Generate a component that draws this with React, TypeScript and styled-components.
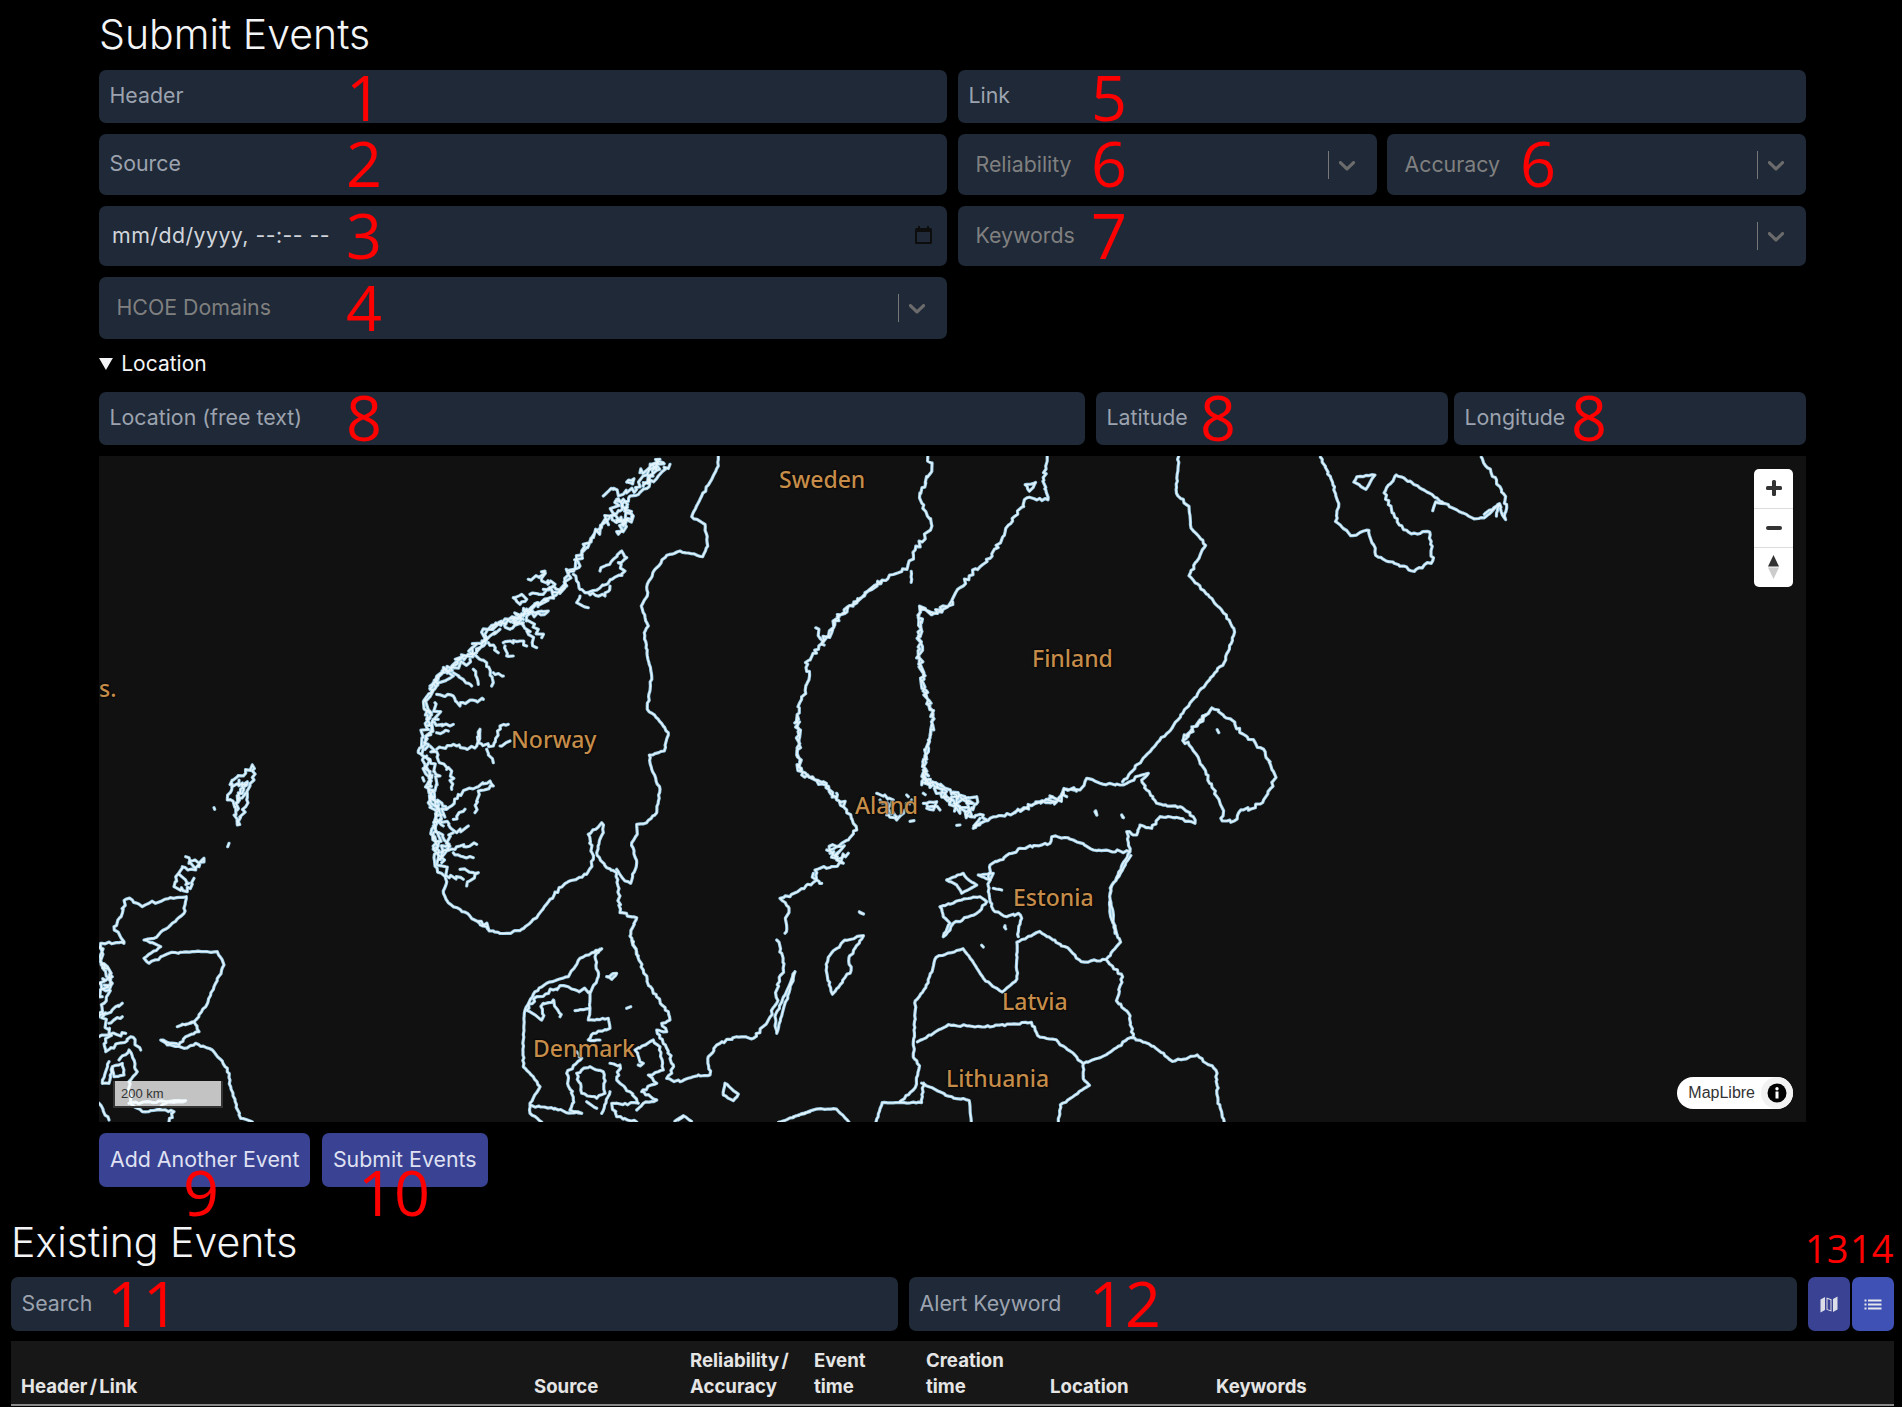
import React from "react";
import styled, { createGlobalStyle } from "styled-components";

const GlobalStyle = createGlobalStyle`
  html, body {
    margin: 0;
    background: #000;
  }
  body {
    font-family: Inter, "Liberation Sans", sans-serif;
    color: #e5e7eb;
  }
`;

const Page = styled.div`
  padding: 10px 8px 0 11px;
  box-sizing: border-box;
  width: 1902px;
  height: 1407px;
  overflow: hidden;
`;

const FormSection = styled.section`
  width: 1707px;
  margin: 0 auto;
`;

const Title = styled.h1`
  margin: 0;
  height: 48px;
  font-size: 41px;
  line-height: 48px;
  font-weight: 300;
  color: #f3f4f6;
`;

const FormGrid = styled.div`
  margin-top: 12px;
  display: grid;
  grid-template-columns: 848px 848px;
  grid-template-rows: 53px 61px 60px 62px;
  column-gap: 11px;
  row-gap: 11px;
`;

const Pair = styled.div`
  display: grid;
  grid-template-columns: 1fr 1fr;
  gap: 10px;
`;

const Field = styled.div`
  position: relative;
  display: flex;
  align-items: center;
  box-sizing: border-box;
  padding: 0 11px 3px 10.5px;
  border-radius: 7px;
  background: #1f2937;
  color: #9ca3af;
  font-size: 21.33px;
`;

const DateField = styled(Field)`
  padding: 0 15px 2px 13px;
  justify-content: space-between;
  color: #d1d5db;
  letter-spacing: 0.45px;
`;

const SelectField = styled(Field)`
  padding: 0 16px 2px 17.5px;
  justify-content: space-between;
  color: #808080;
`;

const Indicators = styled.span`
  display: flex;
  align-items: center;
  margin-bottom: -2px;
`;

const Separator = styled.span`
  width: 1px;
  height: 28px;
  margin-right: 4px;
  background: #777;
`;

const Mark = styled.span<{ $x: number; $dy?: number; $small?: boolean }>`
  position: absolute;
  left: ${(p) => p.$x}px;
  top: 50%;
  transform: translateY(calc(-50% - 2px + ${(p) => p.$dy ?? 0}px));
  z-index: 2;
  color: #ff0000;
  font-family: "Open Sans", "Noto Sans", sans-serif;
  font-size: ${(p) => (p.$small ? 38 : 63)}px;
  font-weight: 400;
  letter-spacing: 0;
  line-height: 1;
  pointer-events: none;
`;

const LocationDetails = styled.details`
  margin-top: 10px;
`;

const LocationSummary = styled.summary`
  height: 30px;
  line-height: 30px;
  font-size: 21px;
  color: #f3f4f6;
`;

const LocationRow = styled.div`
  display: flex;
  height: 53px;
  margin-top: 13px;
`;

const LocationField = styled(Field)`
  flex: 0 0 986px;
`;

const LatField = styled(Field)`
  flex: 0 0 352px;
  margin-left: 11px;
`;

const LongField = styled(Field)`
  flex: 0 0 352px;
  margin-left: 6px;
`;

const MapBox = styled.div`
  position: relative;
  height: 666px;
  margin-top: 11px;
  overflow: hidden;
  background: #111;
`;

const MapSvg = styled.svg`
  display: block;
  width: 100%;
  height: 100%;
`;

const Place = styled.span<{ $x: number; $y: number }>`
  position: absolute;
  left: ${(p) => p.$x}px;
  top: ${(p) => p.$y}px;
  color: #c68d4a;
  font-family: "Noto Sans", "Open Sans", sans-serif;
  font-size: 23px;
  font-weight: 500;
  line-height: 30px;
  text-shadow: 0 0 2px #000, 0 0 2px #000;
`;

const ZoomControl = styled.div`
  position: absolute;
  top: 13px;
  right: 13px;
  width: 39px;
  border-radius: 5px;
  background: #fff;
  overflow: hidden;
`;

const ZoomCell = styled.div`
  display: flex;
  align-items: center;
  justify-content: center;
  height: 38.5px;
  & + & {
    border-top: 1px solid #ddd;
  }
`;

const Attribution = styled.div`
  position: absolute;
  right: 13px;
  bottom: 13px;
  display: flex;
  align-items: center;
  height: 32px;
  padding-left: 11px;
  border-radius: 16px;
  background: #fff;
  color: #333;
  font-family: "Liberation Sans", Arial, sans-serif;
  font-size: 16px;
`;

const InfoDisc = styled.span`
  display: flex;
  align-items: center;
  justify-content: center;
  width: 32px;
  height: 32px;
  margin-left: 6px;
  border-radius: 50%;
  background: #f2f2f2;
`;

const ScaleBar = styled.div`
  position: absolute;
  left: 14px;
  bottom: 14px;
  box-sizing: border-box;
  width: 110px;
  height: 27px;
  padding-left: 6px;
  border: 2px solid #333;
  border-top: none;
  background: rgba(255, 255, 255, 0.75);
  color: #333;
  font-family: "Liberation Sans", Arial, sans-serif;
  font-size: 13px;
  line-height: 25px;
`;

const ButtonRow = styled.div`
  display: flex;
  gap: 11.5px;
  margin-top: 11px;
`;

const Button = styled.button`
  position: relative;
  height: 54px;
  padding: 0 11px 3px;
  border: none;
  border-radius: 7px;
  background: #3a4294;
  color: #dfe1f2;
  font-family: inherit;
  font-size: 21.33px;
`;

const ExistingTitle = styled(Title)`
  margin-top: 31px;
`;

const FilterRow = styled.div`
  display: flex;
  height: 54px;
  margin-top: 11px;
`;

const SearchField = styled(Field)`
  flex: 0 0 887px;
`;

const AlertField = styled(Field)`
  flex: 0 0 888px;
  margin-left: 11px;
`;

const ViewButton = styled.button<{ $active?: boolean; $first?: boolean }>`
  position: relative;
  flex: 0 0 42px;
  display: flex;
  align-items: center;
  justify-content: center;
  padding: 0;
  border: none;
  border-radius: 7px;
  background: ${(p) => (p.$active ? "#3f51b5" : "#3a4294")};
  color: #e5e7eb;
  margin-left: ${(p) => (p.$first ? 11 : 2)}px;
`;

const TableHead = styled.table`
  width: 1883px;
  margin-top: 10px;
  border-collapse: collapse;
  table-layout: fixed;
  background: #171717;
`;

const HeadCell = styled.th<{ $w: number }>`
  width: ${(p) => p.$w}px;
  box-sizing: border-box;
  padding: 5.5px 10px 5.5px;
  border-bottom: 2px solid #8a8a8a;
  color: #e5e5e5;
  font-size: 18.6px;
  font-weight: 700;
  line-height: 26px;
  word-spacing: -2px;
  text-align: left;
  vertical-align: bottom;
`;

// map tracing: coordinates are written in the space of a crop, then moved to map space
type Trace = [number, string];
type TraceGroup = { sx: number; sy: number; dx: number; dy: number; traces: Trace[] };

const traceGroups: TraceGroup[] = [
  {
    // Norway and western Sweden
    sx: 3,
    sy: 3,
    dx: 311,
    dy: 0,
    traces: [
      [0.5, "925,0 925,30 905,70 875,120 845,182 885,205 893,270 878,302 810,285 770,298 740,335 712,385 712,420 694,450 715,510 703,530 712,600 725,660 712,760 745,790 775,830 763,885 718,897 725,940 750,1000 740,1070 710,1100 680,1105 682,1135 665,1160 680,1220 662,1282 645,1275 620,1240"],
      [0.9, "100,1305 115,1340 150,1360 200,1395 240,1425 290,1432 335,1420 380,1385 420,1330 470,1280 530,1255 550,1210 535,1135 575,1100 580,1130 560,1190 590,1235 620,1250 630,1370 680,1385 660,1440 685,1500"],
      [1.6, "780,25 745,60 700,100 660,120 630,165 600,180 575,210 545,245 515,285 500,310 510,330 475,355 465,395 420,425 370,450 335,480 290,490 235,520 215,570 170,600 110,640 70,680 45,735 50,790 65,820 40,870 25,890 45,925 60,970 55,1040 80,1080 65,1120 80,1190 75,1230 105,1260 100,1305"],
      [3, "640,130 600,180 545,245 500,310 475,355 420,425 335,480 235,520 170,600 70,680 50,790 40,870 60,970 80,1080 80,1190 105,1260"],
      [2.2, "580,120 610,100 640,115 680,100 700,60 750,10 720,40 760,20 700,80"],
      [2.2, "620,130 670,180 625,235 650,190 605,180 640,210 665,180"],
      [1, "650,78 672,68 668,84 650,78"],
      [1.1, "570,345 610,310 635,285 650,305 625,320 645,345 590,385 525,410 510,400 490,355"],
      [1, "525,410 585,420 600,390"],
      [1, "510,420 500,440 535,455"],
      [2, "355,370 405,345 395,375 435,385 400,415 360,415"],
      [0.6, "310,425 335,415 350,430 330,445 310,425"],
      [2.2, "340,465 415,465 350,480 385,520 395,545"],
      [1.8, "340,500 380,575"],
      [1.8, "275,500 300,520 340,490"],
      [1.1, "280,560 330,555 350,570"],
      [1.1, "285,570 290,600 310,600"],
      [1.2, "235,560 265,590"],
      [1.1, "180,590 230,620 250,680 245,690"],
      [1, "250,650 280,660"],
      [1.3, "130,650 185,690"],
      [1, "190,640 205,685"],
      [1.2, "100,640 130,660 80,690 60,700"],
      [1.2, "80,715 130,720 150,750 160,740 220,730"],
      [1.2, "65,800 120,810 130,805"],
      [1, "80,830 115,825"],
      [1.1, "80,880 130,865 170,880 200,870 210,820 205,860 250,870 270,810 295,805"],
      [1, "270,870 300,855"],
      [1, "230,880 250,920"],
      [2, "60,870 110,940 125,945 125,1000"],
      [2.4, "50,900 90,960 60,1020 110,1060 80,1100"],
      [1.2, "110,1060 170,1000 240,975 250,990 205,1005 195,1070"],
      [1.2, "130,1090 165,1060"],
      [1.8, "90,1090 140,1130 175,1110"],
      [2.2, "70,1110 120,1170 85,1210 130,1130"],
      [1.4, "80,1190 150,1170 200,1165"],
      [1.2, "130,1190 190,1205"],
      [1.2, "150,1240 205,1250 170,1290"],
      [1.2, "110,1260 160,1270"],
      [0.3, "38,965 42,975"],
      [0.6, "545,1490 575,1478"],
      [2.6, "60,690 100,650 150,625 180,610"],
      [2.6, "45,880 60,830 85,790 75,740"],
      [2.8, "50,930 60,1000 80,1060 100,1110"],
      [2.8, "70,1130 85,1170 95,1220"],
      [2.6, "290,490 340,510 310,500 360,470"],
      [2.6, "640,130 660,170 620,200"],
      [2.8, "690,50 740,30 700,90"],
      [2.4, "400,400 470,390"],
      [2.2, "200,590 240,540 270,520"],
      [2.2, "200,1395 245,1425"],
    ],
  },
  {
    // Denmark and southern Sweden
    sx: 3,
    sy: 3,
    dx: 411,
    dy: 484,
    traces: [
      [0.9, "365,0 380,40 400,90 430,160 475,215 480,240 455,250 470,275 440,270 470,325 490,375 485,400 470,415 510,425 550,410 600,405 595,350 620,315 680,290 730,295 770,250 800,190 800,150 820,90 815,40 800,0"],
      [0.5, "855,95 800,280 795,230 855,95"],
      [0.4, "270,28 210,55 175,110 110,130 75,155 45,210 40,300 40,380 70,410 90,440 60,490 60,520 95,546"],
      [0.5, "270,28 255,50 265,110 240,160 240,205 235,240 295,235 300,265 250,280 235,300 270,300"],
      [1.6, "240,155 175,140 130,150 80,170 50,210 95,240 100,190 130,180 150,230"],
      [0.4, "195,212 240,205"],
      [0.5, "290,110 320,100 305,118 290,110"],
      [0.2, "350,205 362,200"],
      [1, "170,400 215,355 200,335"],
      [0.8, "200,400 240,380 280,395 285,460 260,475 215,460 200,400"],
      [1, "170,400 190,480 180,510 215,520 145,510 60,495"],
      [1, "300,370 330,375 320,420 360,455 385,490 345,490 305,490 320,530 380,546"],
      [0.6, "440,480 400,490 380,510"],
      [0.9, "375,330 430,300 450,320 460,390 415,405 440,430 395,455 440,480"],
      [1.2, "375,330 400,370 385,375"],
      [0.4, "645,430 685,462 670,482 640,465 645,430"],
      [0.4, "300,455 275,520"],
      [0.4, "230,485 260,505"],
      [0.4, "505,540 520,530"],
      [0.3, "850,530 900,515"],
    ],
  },
  {
    // Scotland, Orkney, Shetland
    sx: 3,
    sy: 3,
    dx: 0,
    dy: 294,
    traces: [
      [1.6, "460,45 440,70 400,90 385,150 410,170 415,225 440,170 445,130 465,90 460,45"],
      [1.8, "400,110 445,95 410,160 440,130"],
      [2.6, "420,90 430,130 415,180"],
      [0.2, "345,173 347,178"],
      [0.2, "390,280 386,290"],
      [1.5, "260,320 300,340 315,325 290,360 250,350 230,380 225,410 265,425 285,385"],
      [2.4, "240,370 270,400"],
      [2.4, "270,340 300,350"],
      [1.1, "262,440 225,445 150,460 130,470 100,450 80,448 70,490 45,530 75,580 5,580 10,650 40,700 15,760 0,800"],
      [0.6, "262,440 255,490 215,525 165,565 135,570 185,590 135,625 150,640 210,610 280,605 355,605 375,645 345,710 320,770 285,815 235,830 285,815 300,845 260,860 240,885 185,870 205,885 255,895 290,880 340,900 385,955 395,1010 425,1105 460,1116"],
      [1.2, "0,800 70,760"],
      [1.2, "30,820 70,800"],
      [1.4, "0,860 80,850"],
      [1.2, "20,905 95,860 125,900"],
      [0.8, "60,930 90,900 115,965 90,995 95,1060 130,1085 190,1080 225,1085 210,1116"],
      [0.5, "30,935 10,1000 30,1000 40,950 70,940 75,975 45,980 40,950"],
      [0.6, "90,1060 260,1052 200,1060 170,1080"],
      [0.6, "0,1060 30,1110"],
      [2, "10,640 40,680 0,700 30,720"],
      [2.6, "5,590 30,680 10,740"],
      [2.2, "10,780 30,850 20,900"],
    ],
  },
  {
    // Aland, Gulf of Finland, Estonia
    sx: 3,
    sy: 3,
    dx: 681,
    dy: 304,
    traces: [
      [0.9, "1050,275 940,270 880,240 815,230 810,250 720,265 660,300 630,315 625,395 640,450 680,470 715,460 725,475 715,530"],
      [0.6, "480,440 545,420 600,410 620,425 590,460 520,490 510,510 490,530 510,490 490,470 480,440"],
      [0.5, "500,360 550,340 560,355 590,375 545,400 530,375 500,360"],
      [0.4, "595,345 640,340 630,360 595,345"],
      [0.3, "640,385 665,390"],
      [0.8, "1050,275 1040,215 1070,225 1080,195 1115,205 1140,170 1200,175 1245,190 1240,170 1200,140 1130,130 1100,90 1085,60 1105,40 1085,45 1040,70 1020,75 960,70 920,55 900,90 850,90 830,125 780,125 700,160 630,175 580,205 610,185"],
      [1.6, "900,90 850,90 830,125 780,125 700,160"],
      [2, "430,0 425,75 470,70 540,110 590,110 560,165 610,165 620,180"],
      [2.6, "440,60 500,110 540,160 580,130 520,100"],
      [2.6, "430,30 450,70 500,110 560,130"],
      [2.8, "470,80 540,140 570,170"],
      [2.6, "520,120 560,170"],
      [2.2, "600,175 580,205"],
      [2.2, "440,130 480,150"],
      [2.4, "800,120 860,110"],
      [0.5, "1050,275 1000,370 990,400 1005,520"],
      [0.2, "945,155 950,165"],
      [0.2, "1025,165 1028,172"],
      [0.2, "240,458 250,462"],
      [0.2, "675,497 675,503"],
      [0.3, "390,184 402,182"],
      [0.2, "530,196 540,195"],
      [1.1, "60,0 65,45 130,65 170,120 200,150 220,190 230,210 205,240 150,270 190,310 105,330 110,360 30,410 0,415 25,440 15,520"],
      [2.8, "140,270 190,260 170,300 205,280"],
      [3, "150,280 190,290"],
      [2.2, "100,340 125,370"],
      [2.2, "170,100 190,140"],
      [1.2, "290,100 340,120 320,165 350,180 395,120"],
      [2.2, "300,120 350,170"],
      [0.5, "430,130 470,125 460,150 440,145"],
      [0.2, "430,100 436,104"],
      [0.2, "380,105 385,110"],
    ],
  },
  {
    // Bothnia, Finland, the Baltic states
    sx: 2.412,
    sy: 2.306,
    dx: 551,
    dy: -6,
    traces: [
      [1.3, "670,15 680,40 650,110 680,175 640,230 620,275 560,300 520,330 460,380 420,440 375,490 385,520 355,610 360,740 415,770 450,800"],
      [2, "560,300 520,330 460,380 420,440"],
      [1.8, "355,610 360,740"],
      [0.4, "630,280 630,305"],
      [1.6, "400,410 420,450"],
      [1.3, "958,15 950,70 960,115 910,110 870,170 820,250 770,290 720,360 680,380 650,360 650,480 660,550 685,620 660,730 670,770"],
      [2.2, "650,360 650,480 660,550 685,620 660,730 670,770"],
      [2, "650,360 680,375 730,350"],
      [0.5, "905,80 930,75 915,95 905,80"],
      [0.6, "1275,15 1270,100 1300,130 1305,180 1340,220 1300,290 1390,380 1410,420 1385,490 1330,550 1260,640 1190,710 1140,765"],
      [1.1, "1285,670 1355,595 1400,620 1430,655 1480,690 1510,755 1485,800 1460,825 1425,830 1410,855 1380,855 1380,825 1340,740 1300,680 1285,670"],
      [1.8, "1285,670 1355,595"],
      [0.6, "1160,935 1110,1010 1110,1070 1135,1135 1100,1175"],
      [0.7, "885,1135 940,1110 1000,1145 1040,1180 1100,1175 1140,1215 1125,1270 1155,1300 1165,1355"],
      [0.5, "885,1135 885,1220 850,1250 810,1225 755,1150 690,1170 665,1240 640,1270 635,1400 650,1420 640,1470 600,1505 655,1505 660,1460"],
      [0.7, "645,1365 720,1325 800,1330 920,1320 935,1350 980,1360 1045,1415 1100,1395 1160,1355 1215,1375 1260,1410 1320,1395 1365,1430 1370,1500 1385,1550"],
      [0.5, "1045,1415 1045,1450 1060,1465 990,1510 985,1550"],
      [0.5, "655,1460 720,1490 770,1500 775,1550"],
      [0.3, "600,1505 560,1505 545,1550"],
      [0.3, "310,1550 400,1520 450,1520 480,1550"],
      [0.4, "60,1548 80,1535 100,1548"],
      [0.7, "430,1170 470,1130 515,1120 480,1170 485,1200 440,1255 425,1200 430,1170"],
      [0.2, "505,1065 515,1070"],
      [0.2, "800,1142 804,1146"],
      [0.2, "855,1100 858,1104"],
      [0.2, "1075,832 1078,842"],
      [0.2, "1138,842 1142,848"],
      [0.2, "1368,645 1372,652"],
    ],
  },
  {
    // White Sea shore, top right
    sx: 1.647,
    sy: 2.8,
    dx: 851,
    dy: -406,
    traces: [
      [0.8, "610,1140 630,1210 640,1280 635,1320 660,1360 690,1345 695,1380 705,1420 765,1460 795,1430 790,1350 760,1355 740,1330 715,1240 735,1190 770,1220 810,1265 860,1310 880,1310 905,1270 915,1315 915,1250 875,1140"],
      [0.5, "670,1195 700,1190 685,1230 665,1210 670,1195"],
      [0.4, "795,1290 800,1265 815,1270"],
      [0.6, "880,1300 905,1275 900,1305"],
    ],
  },
];

const buildCoastlines = () => {
  let seed = 7;
  const next = () => {
    seed = (seed * 9301 + 49297) % 233280;
    return seed / 233280 - 0.5;
  };
  const paths: string[] = [];
  traceGroups.forEach((group) => {
    group.traces.forEach(([amp, text]) => {
      const pts = text.split(" ").map((pair) => {
        const [x, y] = pair.split(",").map(Number);
        return [group.dx + x / group.sx, group.dy + y / group.sy];
      });
      let d = `M${pts[0][0].toFixed(1)} ${pts[0][1].toFixed(1)}`;
      for (let i = 1; i < pts.length; i++) {
        const [ax, ay] = pts[i - 1];
        const [bx, by] = pts[i];
        const steps = Math.max(1, Math.round(Math.hypot(bx - ax, by - ay) / 3));
        for (let s = 1; s <= steps; s++) {
          const t = s / steps;
          const j = s === steps ? 0 : amp * 3;
          d += `L${(ax + (bx - ax) * t + next() * j).toFixed(1)} ${(ay + (by - ay) * t + next() * j).toFixed(1)}`;
        }
      }
      paths.push(d);
    });
  });
  return paths.join("");
};

const coastlines = buildCoastlines();

const places = [
  { name: "Sweden", x: 680, y: 8 },
  { name: "Finland", x: 933, y: 187 },
  { name: "s.", x: 0, y: 217 },
  { name: "Norway", x: 412, y: 268 },
  { name: "Aland", x: 756, y: 334 },
  { name: "Estonia", x: 914, y: 426 },
  { name: "Latvia", x: 903, y: 530 },
  { name: "Denmark", x: 434, y: 577 },
  { name: "Lithuania", x: 847, y: 607 },
];

const Chevron = () => (
  <svg width="28" height="28" viewBox="0 0 20 20" fill="#6b6b6b">
    <path d="M4.516 7.548c0.436-0.446 1.043-0.481 1.576 0l3.908 3.747 3.908-3.747c0.533-0.481 1.141-0.446 1.574 0 0.436 0.445 0.408 1.197 0 1.615-0.406 0.418-4.695 4.502-4.695 4.502-0.217 0.223-0.502 0.335-0.787 0.335s-0.57-0.112-0.789-0.335c0 0-4.287-4.084-4.695-4.502s-0.436-1.17 0-1.615z" />
  </svg>
);

const SelectArrow = () => (
  <Indicators>
    <Separator />
    <Chevron />
  </Indicators>
);

const CalendarIcon = () => (
  <svg width="17" height="18" viewBox="0 0 17 18">
    <path
      fill="#0d0d0d"
      d="M3 0h2v2h7V0h2v2h1.5A1.5 1.5 0 0 1 17 3.5v13a1.5 1.5 0 0 1-1.5 1.5h-14A1.5 1.5 0 0 1 0 16.5v-13A1.5 1.5 0 0 1 1.500 2H3zM2 6v10h13V6z"
    />
  </svg>
);

const MapIcon = () => (
  <svg width="18" height="17" viewBox="0 0 18 17" fill="currentColor">
    <path d="M0.500 3.500 5 1v13l-4.500 2.500zM13 3l4.500-2.500v13L13 16zM6.500 1.500l5 1.800v12.200l-5-1.800z" opacity="0.95" />
    <path d="M7.500 3v10.200l3 1.100V4.100z" fill="#3a4294" />
  </svg>
);

const ListIcon = () => (
  <svg width="18" height="11" viewBox="0 0 18 11" fill="currentColor">
    <rect x="0.500" y="0.500" width="2" height="2" />
    <rect x="0.500" y="4.500" width="2" height="2" />
    <rect x="0.500" y="8.500" width="2" height="2" />
    <rect x="4" y="0.500" width="13.500" height="2" />
    <rect x="4" y="4.500" width="13.500" height="2" />
    <rect x="4" y="8.500" width="13.500" height="2" />
  </svg>
);

const columns: { w: number; lines: string[] }[] = [
  { w: 513, lines: ["Header / Link"] },
  { w: 156, lines: ["Source"] },
  { w: 124, lines: ["Reliability /", "Accuracy"] },
  { w: 112, lines: ["Event", "time"] },
  { w: 124, lines: ["Creation", "time"] },
  { w: 166, lines: ["Location"] },
  { w: 688, lines: ["Keywords"] },
];

export default function App() {
  return (
    <>
      <GlobalStyle />
      <Page>
        <FormSection>
          <Title>Submit Events</Title>
          <FormGrid>
            <Field>
              Header
              <Mark $x={247} $dy={1}>1</Mark>
            </Field>
            <Field>
              Link
              <Mark $x={133} $dy={1}>5</Mark>
            </Field>
            <Field>
              Source
              <Mark $x={247} $dy={-1}>2</Mark>
            </Field>
            <Pair>
              <SelectField>
                Reliability
                <Mark $x={133} $dy={-1}>6</Mark>
                <SelectArrow />
              </SelectField>
              <SelectField>
                Accuracy
                <Mark $x={133} $dy={-1}>6</Mark>
                <SelectArrow />
              </SelectField>
            </Pair>
            <DateField>
              mm/dd/yyyy, --:-- --
              <Mark $x={247}>3</Mark>
              <CalendarIcon />
            </DateField>
            <SelectField>
              Keywords
              <Mark $x={133}>7</Mark>
              <SelectArrow />
            </SelectField>
            <SelectField>
              HCOE Domains
              <Mark $x={247}>4</Mark>
              <SelectArrow />
            </SelectField>
          </FormGrid>
          <LocationDetails open>
            <LocationSummary>Location</LocationSummary>
            <LocationRow>
              <LocationField>
                Location (free text)
                <Mark $x={247} $dy={-1}>8</Mark>
              </LocationField>
              <LatField>
                Latitude
                <Mark $x={104} $dy={-1}>8</Mark>
              </LatField>
              <LongField>
                Longitude
                <Mark $x={117} $dy={-1}>8</Mark>
              </LongField>
            </LocationRow>
            <MapBox>
              <MapSvg viewBox="0 0 1707 666">
                <path
                  d={coastlines}
                  fill="none"
                  stroke="#9fcde6"
                  strokeWidth="3.200"
                  strokeLinecap="round"
                  strokeLinejoin="round"
                />
                <path
                  d={coastlines}
                  fill="none"
                  stroke="#e4f4fc"
                  strokeWidth="1.400"
                  strokeLinecap="round"
                  strokeLinejoin="round"
                />
              </MapSvg>
              {places.map((place) => (
                <Place key={place.name} $x={place.x} $y={place.y}>
                  {place.name}
                </Place>
              ))}
              <ZoomControl>
                <ZoomCell>
                  <svg width="16" height="16" viewBox="0 0 16 16" fill="#333">
                    <rect x="0" y="6" width="16" height="4" rx="1.500" />
                    <rect x="6" y="0" width="4" height="16" rx="1.500" />
                  </svg>
                </ZoomCell>
                <ZoomCell>
                  <svg width="16" height="4" viewBox="0 0 16 4" fill="#333">
                    <rect width="16" height="4" rx="2" />
                  </svg>
                </ZoomCell>
                <ZoomCell>
                  <svg width="11" height="24" viewBox="0 0 11 24">
                    <path d="M5.500 0 11 11.500H0z" fill="#333" />
                    <path d="M5.500 24 11 12.500H0z" fill="#ccc" />
                  </svg>
                </ZoomCell>
              </ZoomControl>
              <ScaleBar>200 km</ScaleBar>
              <Attribution>
                MapLibre
                <InfoDisc>
                  <svg width="20" height="20" viewBox="0 0 20 20">
                    <circle cx="10" cy="10" r="9.500" fill="#000" />
                    <rect x="8.500" y="8.500" width="3" height="7" fill="#fff" />
                    <circle cx="10" cy="5.800" r="1.700" fill="#fff" />
                  </svg>
                </InfoDisc>
              </Attribution>
            </MapBox>
          </LocationDetails>
          <ButtonRow>
            <Button>
              Add Another Event
              <Mark $x={84} $dy={33.4}>9</Mark>
            </Button>
            <Button>
              Submit Events
              <Mark $x={36} $dy={33.4}>10</Mark>
            </Button>
          </ButtonRow>
        </FormSection>
        <ExistingTitle>Existing Events</ExistingTitle>
        <FilterRow>
          <SearchField>
            Search
            <Mark $x={96}>11</Mark>
          </SearchField>
          <AlertField>
            Alert Keyword
            <Mark $x={180}>12</Mark>
          </AlertField>
          <ViewButton $first>
            <MapIcon />
            <Mark $x={-3} $dy={-54} $small>13</Mark>
          </ViewButton>
          <ViewButton $active>
            <ListIcon />
            <Mark $x={-2} $dy={-54} $small>14</Mark>
          </ViewButton>
        </FilterRow>
        <TableHead>
          <thead>
            <tr>
              {columns.map((col) => (
                <HeadCell key={col.lines[0]} $w={col.w}>
                  {col.lines.map((line) => (
                    <div key={line}>{line}</div>
                  ))}
                </HeadCell>
              ))}
            </tr>
          </thead>
        </TableHead>
      </Page>
    </>
  );
}
